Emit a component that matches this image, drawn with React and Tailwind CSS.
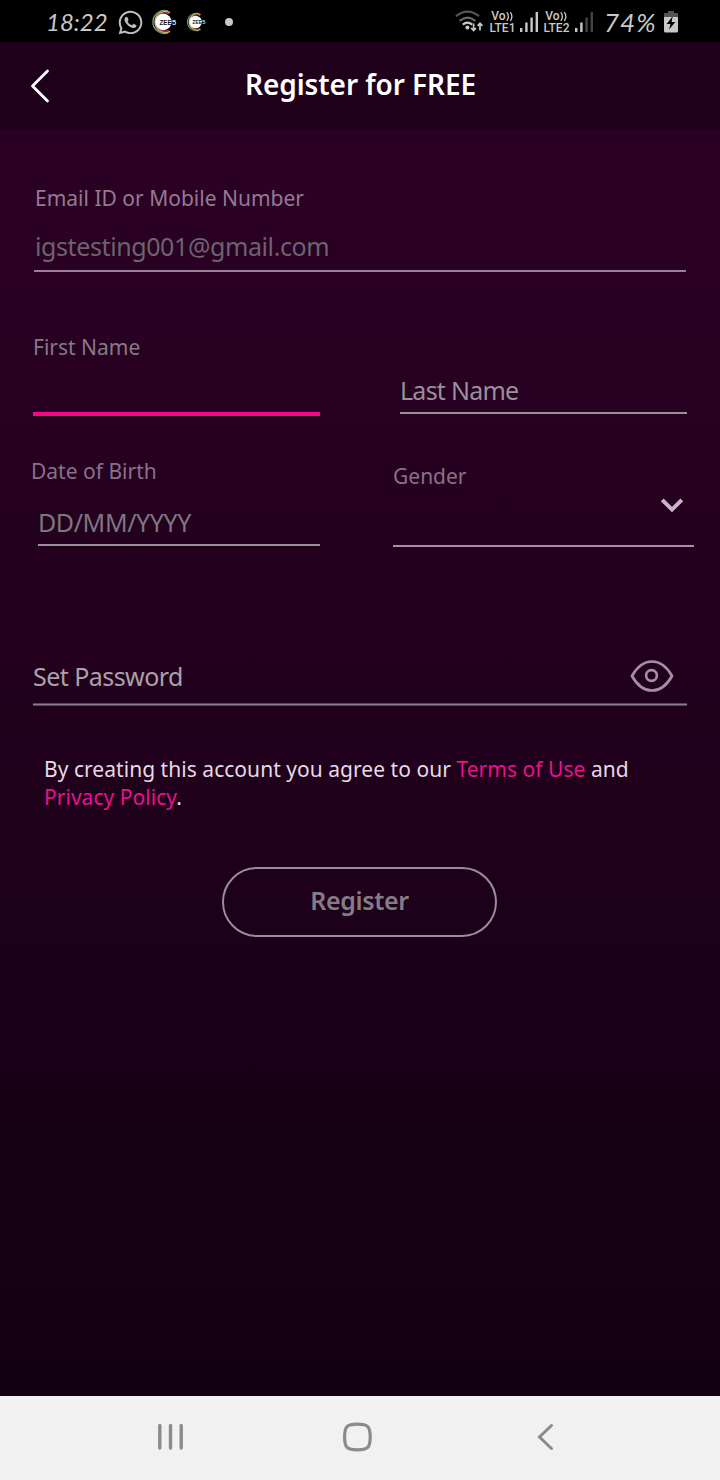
import React from "react";
import { FaWhatsapp } from "react-icons/fa";

function ZeeBadge({ className }) {
  return (
    <svg className={className} viewBox="0 0 26 26">
      <g fill="none">
        <path d="M17 2.200A11.400 11.400 0 1 0 17 23.800" stroke="#5fa48c" strokeWidth="1.400" />
        <path d="M19 3.600A10.400 10.400 0 1 0 19 22.400" stroke="#e3b04a" strokeWidth="1.600" />
        <path d="M18 4.600A9.200 9.200 0 1 0 18 21.400" stroke="#a8354a" strokeWidth="1.300" />
      </g>
      <circle cx="12.400" cy="13" r="8.200" fill="#fff" />
      <text x="8.600" y="15.700" fontSize="7.500" fontWeight="700" fontFamily="Liberation Sans, sans-serif" fill="#111" textLength="12" lengthAdjust="spacingAndGlyphs">ZEE</text>
      <text x="21" y="15.700" fontSize="7.500" fontWeight="700" fontFamily="Liberation Sans, sans-serif" fill="#ddd">5</text>
    </svg>
  );
}

function WifiIcon() {
  return (
    <svg className="ml-[455px] h-[26px] w-[30px] shrink-0" viewBox="0 0 30 26" fill="none">
      <path d="M1 7.2Q12.5 -2 24 7.2" stroke="#555" strokeWidth="2.2" />
      <path d="M4.5 12Q12.5 5.4 20.5 12" stroke="#6a6a6a" strokeWidth="2.2" />
      <path d="M7.8 15.6Q12.5 11.6 17.2 15.6" stroke="#c8c8c8" strokeWidth="2.2" />
      <circle cx="12.4" cy="18.4" r="2" fill="#c8c8c8" />
      <path d="M18.6 14.5V21M16.2 19L18.6 21.6L21 19M25 21.5V14.5M22.6 16.8L25 14.2L27.4 16.8" stroke="#c8c8c8" strokeWidth="1.7" />
    </svg>
  );
}

function VoLte({ line }) {
  return (
    <div className="flex w-[27px] shrink-0 flex-col items-center font-[Roboto,sans-serif] text-[12px] leading-[12px] font-medium whitespace-nowrap text-[#c8c8c8]">
      <span className="flex items-center">
        Vo
        <svg className="h-[11px] w-[8px]" viewBox="0 0 8 11" fill="none" stroke="#c8c8c8" strokeWidth="1.300">
          <path d="M0.800 1.200Q4 5.500 0.800 9.800M4.300 1.200Q7.500 5.500 4.300 9.800" />
        </svg>
      </span>
      <span>{line}</span>
    </div>
  );
}

function Signal({ dim }) {
  const faint = dim ? "#444" : "#c8c8c8";
  return (
    <svg className="h-[20px] w-[19px] shrink-0" viewBox="0 0 19 20">
      <rect x="0" y="16" width="2.4" height="4" fill="#c8c8c8" />
      <rect x="5.2" y="10.5" width="2.4" height="9.5" fill="#c8c8c8" />
      <rect x="10.4" y="5.5" width="2.4" height="14.5" fill={faint} />
      <rect x="15.6" y="0" width="2.4" height="20" fill={faint} />
    </svg>
  );
}

function BatteryIcon() {
  return (
    <svg className="h-[22px] w-[14px] shrink-0" viewBox="0 0 14 22">
      <path d="M4 0H10V2H14V6H0V2H4Z" fill="#555" />
      <path d="M0 6H14V20Q14 21.5 12.5 21.5H1.500Q0 21.5 0 20Z" fill="#c8c8c8" />
      <path d="M8.600 5.500L2.600 13H6.500L5 18.500L11.400 11H7.600Z" fill="#000" />
    </svg>
  );
}

function StatusBar() {
  return (
    <div className="flex h-[42px] shrink-0 items-center bg-black pt-[2px]">
      <div className="flex w-0 items-center pl-[46px]">
        <span className="w-[72px] shrink-0 font-[Lato,sans-serif] text-[24px] leading-[30px] text-[#c8c8c8] italic">18:22</span>
        <FaWhatsapp className="h-[27px] w-[25px] shrink-0 text-[#c0c0c0]" />
        <ZeeBadge className="ml-[8px] h-[26px] w-[26px] shrink-0 overflow-visible" />
        <ZeeBadge className="ml-[9px] h-[20px] w-[20px] shrink-0 overflow-visible" />
        <span className="ml-[19px] h-[8px] w-[8px] shrink-0 rounded-full bg-[#c8c8c8]" />
      </div>
      <div className="-ml-[46px] flex items-center">
        <WifiIcon />
        <div className="ml-[4px]"><VoLte line="LTE1" /></div>
        <div className="ml-[4px]"><Signal /></div>
        <div className="ml-[4px]"><VoLte line="LTE2" /></div>
        <div className="ml-[5px]"><Signal dim /></div>
        <span className="ml-[10px] w-[60px] font-[Lato,sans-serif] text-[26px] leading-[30px] tracking-[1px] text-[#c8c8c8] italic">74%</span>
        <BatteryIcon />
      </div>
    </div>
  );
}

function Header() {
  return (
    <header className="flex h-[87px] shrink-0 items-center bg-[#1e001b]">
      <svg className="ml-[30px] h-[36px] w-[22px]" viewBox="0 0 22 36" fill="none">
        <path d="M17.500 3L2.500 18L17.500 33" stroke="#fff" strokeWidth="2.800" strokeLinecap="round" strokeLinejoin="round" />
      </svg>
      <h1 className="ml-[193px] pb-[3px] text-[28px] leading-[38px] font-semibold tracking-[-0.07px] whitespace-nowrap text-white">Register for FREE</h1>
    </header>
  );
}

const label = "block whitespace-nowrap pt-px text-[21px] leading-[30px]";
const value = "block whitespace-nowrap text-[25px] leading-[34px]";

function RegisterForm() {
  return (
    <main className="min-h-0 flex-1 bg-linear-to-b from-[#2c0026] via-[#1e001a] via-60% to-[#130010]">
      <div className="mr-[34px] ml-[34px] h-[143px] border-b-2 border-[#9a7f98] pt-[53px]">
        <label className={`${label} pl-px text-[#937a92]`}>Email ID or Mobile Number</label>
        <span className={`${value} mt-[16px] pl-px tracking-[-0.4px] text-[#6c636c]`}>igstesting001@gmail.com</span>
      </div>

      <div className="mr-[33px] ml-[33px] flex items-start justify-between pt-[59px]">
        <div className="h-[85px] w-[287px] border-b-4 border-[#f9058c]">
          <label className={`${label} text-[#857a85]`}>First Name</label>
        </div>
        <div className="mt-[42px] h-[41px] w-[287px] border-b-2 border-[#9b8f9a]">
          <span className={`${value} tracking-[-0.75px] text-[#999099]`}>Last Name</span>
        </div>
      </div>

      <div className="mr-[26px] ml-[31px] flex items-start justify-between pt-[39px]">
        <div className="w-[289px]">
          <label className={`${label} text-[#89708a]`}>Date of Birth</label>
          <div className="mt-[19px] ml-[7px] h-[41px] border-b-2 border-[#9b8f9a]">
            <span className={`${value} tracking-[-0.4px] text-[#7e767e]`}>DD/MM/YYYY</span>
          </div>
        </div>
        <div className="mt-[5px] h-[87px] w-[301px] border-b-2 border-[#a58fa3]">
          <label className={`${label} text-[#89708a]`}>Gender</label>
          <svg className="mt-[6px] mr-[10px] ml-auto h-[16px] w-[24px]" viewBox="0 0 24 16" fill="none">
            <path d="M2.200 2.800L12 12.600L21.800 2.800" stroke="#c9b4c8" strokeWidth="3.900" />
          </svg>
        </div>
      </div>

      <div className="mr-[33px] ml-[33px] mt-[108px] flex h-[50px] items-start justify-between border-b border-[#8a7d89] pt-[4px] shadow-[0_1px_0_#564554,inset_0_-1px_0_#564554]">
        <span className={`${value} tracking-[-0.55px] text-[#aaa0a9]`}>Set Password</span>
        <svg className="mt-px mr-[13px] h-[32px] w-[44px]" viewBox="0 0 44 32" fill="none" stroke="#a58fa5" strokeWidth="2.700">
          <path d="M2 16C7 7 14 1.500 22 1.500S37 7 42 16C37 25 30 30.500 22 30.500S7 25 2 16Z" strokeLinejoin="round" />
          <circle cx="21.500" cy="15.500" r="5.400" />
        </svg>
      </div>

      <p className="mt-[50px] ml-[44px] w-[620px] text-[21px] leading-[28px] tracking-[0.04px] text-[#e4dbe3]">
        By creating this account you agree to our <a className="text-[#e8128c]">Terms of Use</a> and
        <br />
        <a className="text-[#e8128c]">Privacy Policy</a>.
      </p>

      <button className="mt-[56px] ml-[222px] flex h-[70px] w-[275px] items-center justify-center rounded-full border-2 border-[#9b8c9b] pb-[4px] text-[25px] leading-[34px] font-semibold tracking-[-0.35px] text-[#857d85]">
        Register
      </button>
    </main>
  );
}

function NavBar() {
  return (
    <nav className="flex h-[84px] shrink-0 items-center bg-[#f1f1f1] pb-[3px] pl-[157px]">
      <svg className="h-[30px] w-[27px]" viewBox="0 0 27 30" stroke="#8b8b8b" strokeWidth="3.400" strokeLinecap="round">
        <path d="M2.800 3.500V26M13.500 3.500V26M24.200 3.500V26" />
      </svg>
      <svg className="ml-[158px] h-[30px] w-[30px]" viewBox="0 0 30 30" fill="none" stroke="#8b8b8b" strokeWidth="3.200">
        <path d="M15.400 2.200C25.900 2.200 28.200 4.500 28.200 15S25.900 27.800 15.400 27.800S2.600 25.500 2.600 15S4.900 2.200 15.400 2.200Z" />
      </svg>
      <svg className="ml-[164px] h-[30px] w-[20px]" viewBox="0 0 20 30" fill="none" stroke="#8b8b8b" strokeWidth="3" strokeLinecap="round">
        <path d="M15.500 3.500L3.500 15L15.500 26.500" />
      </svg>
    </nav>
  );
}

export default function App() {
  return (
    <div className="flex h-[1480px] w-[720px] flex-col overflow-hidden font-['Noto_Sans',sans-serif]">
      <StatusBar />
      <Header />
      <RegisterForm />
      <NavBar />
    </div>
  );
}
